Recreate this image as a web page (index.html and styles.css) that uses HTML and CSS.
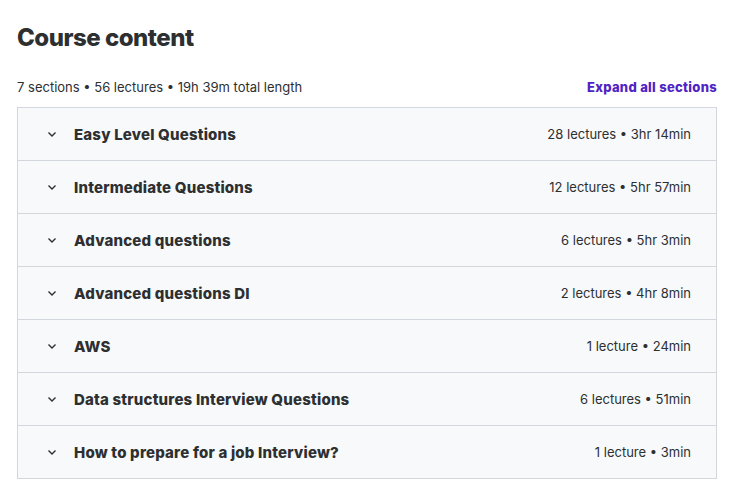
FILE: index.html
```html
<!DOCTYPE html>
<html lang="en">
<head>
  <meta charset="UTF-8" />
  <title>Course content</title>
  <link rel="stylesheet" href="styles.css">
</head>
<body>
  <h2 class="title">Course content</h2>

  <div class="meta">
    <span>7 sections • 56 lectures • 19h 39m total length</span>
    <a class="expand" href="#">Expand all sections</a>
  </div>

  <div class="sections">
    <div class="row">
      <span class="chev"><svg width="12" height="12" viewBox="0 0 12 12"><path d="M2.5 4.5 6 8l3.5-3.5" fill="none" stroke="#2d2f31" stroke-width="1.4"/></svg></span>
      <span class="name">Easy Level Questions</span>
      <span class="info">28 lectures • 3hr 14min</span>
    </div>
    <div class="row">
      <span class="chev"><svg width="12" height="12" viewBox="0 0 12 12"><path d="M2.5 4.5 6 8l3.5-3.5" fill="none" stroke="#2d2f31" stroke-width="1.4"/></svg></span>
      <span class="name">Intermediate Questions</span>
      <span class="info">12 lectures • 5hr 57min</span>
    </div>
    <div class="row">
      <span class="chev"><svg width="12" height="12" viewBox="0 0 12 12"><path d="M2.5 4.5 6 8l3.5-3.5" fill="none" stroke="#2d2f31" stroke-width="1.4"/></svg></span>
      <span class="name">Advanced questions</span>
      <span class="info">6 lectures • 5hr 3min</span>
    </div>
    <div class="row">
      <span class="chev"><svg width="12" height="12" viewBox="0 0 12 12"><path d="M2.5 4.5 6 8l3.5-3.5" fill="none" stroke="#2d2f31" stroke-width="1.4"/></svg></span>
      <span class="name">Advanced questions DI</span>
      <span class="info">2 lectures • 4hr 8min</span>
    </div>
    <div class="row">
      <span class="chev"><svg width="12" height="12" viewBox="0 0 12 12"><path d="M2.5 4.5 6 8l3.5-3.5" fill="none" stroke="#2d2f31" stroke-width="1.4"/></svg></span>
      <span class="name">AWS</span>
      <span class="info">1 lecture • 24min</span>
    </div>
    <div class="row">
      <span class="chev"><svg width="12" height="12" viewBox="0 0 12 12"><path d="M2.5 4.5 6 8l3.5-3.5" fill="none" stroke="#2d2f31" stroke-width="1.4"/></svg></span>
      <span class="name">Data structures Interview Questions</span>
      <span class="info">6 lectures • 51min</span>
    </div>
    <div class="row">
      <span class="chev"><svg width="12" height="12" viewBox="0 0 12 12"><path d="M2.5 4.5 6 8l3.5-3.5" fill="none" stroke="#2d2f31" stroke-width="1.4"/></svg></span>
      <span class="name">How to prepare for a job Interview?</span>
      <span class="info">1 lecture • 3min</span>
    </div>
  </div>
</body>
</html>
```

FILE: styles.css
```css
body {
  font-family: Inter, "Noto Sans", sans-serif;
  margin: 0;
  padding: 0 16px 0 17px;
  background-color: white;
  color: #2d2f31;
}

.title {
  font-size: 24px;
  font-weight: 800;
  margin: 0;
  padding-top: 24px;
  line-height: 28px;
  letter-spacing: -0.5px;
}

.meta {
  display: flex;
  justify-content: space-between;
  align-items: center;
  font-size: 13px;
  margin-top: 26px;
  height: 18px;
  margin-bottom: 11px;
}

.expand {
  color: #5022c3;
  font-weight: 800;
  text-decoration: none;
  font-size: 13px;
  letter-spacing: 0.3px;
}

.sections {
  border: 1px solid #d1d7dc;
  border-bottom: none;
}

.row {
  display: flex;
  align-items: center;
  height: 52px;
  background-color: #f7f9fa;
  border-bottom: 1px solid #d1d7dc;
  padding: 0 25px 0 28px;
}

.chev {
  width: 12px;
  height: 12px;
  display: flex;
  margin-right: 16px;
}

.name {
  font-weight: 800;
  font-size: 15px;
  flex: 1;
  letter-spacing: 0.2px;
}

.info {
  font-size: 13px;
}
```
